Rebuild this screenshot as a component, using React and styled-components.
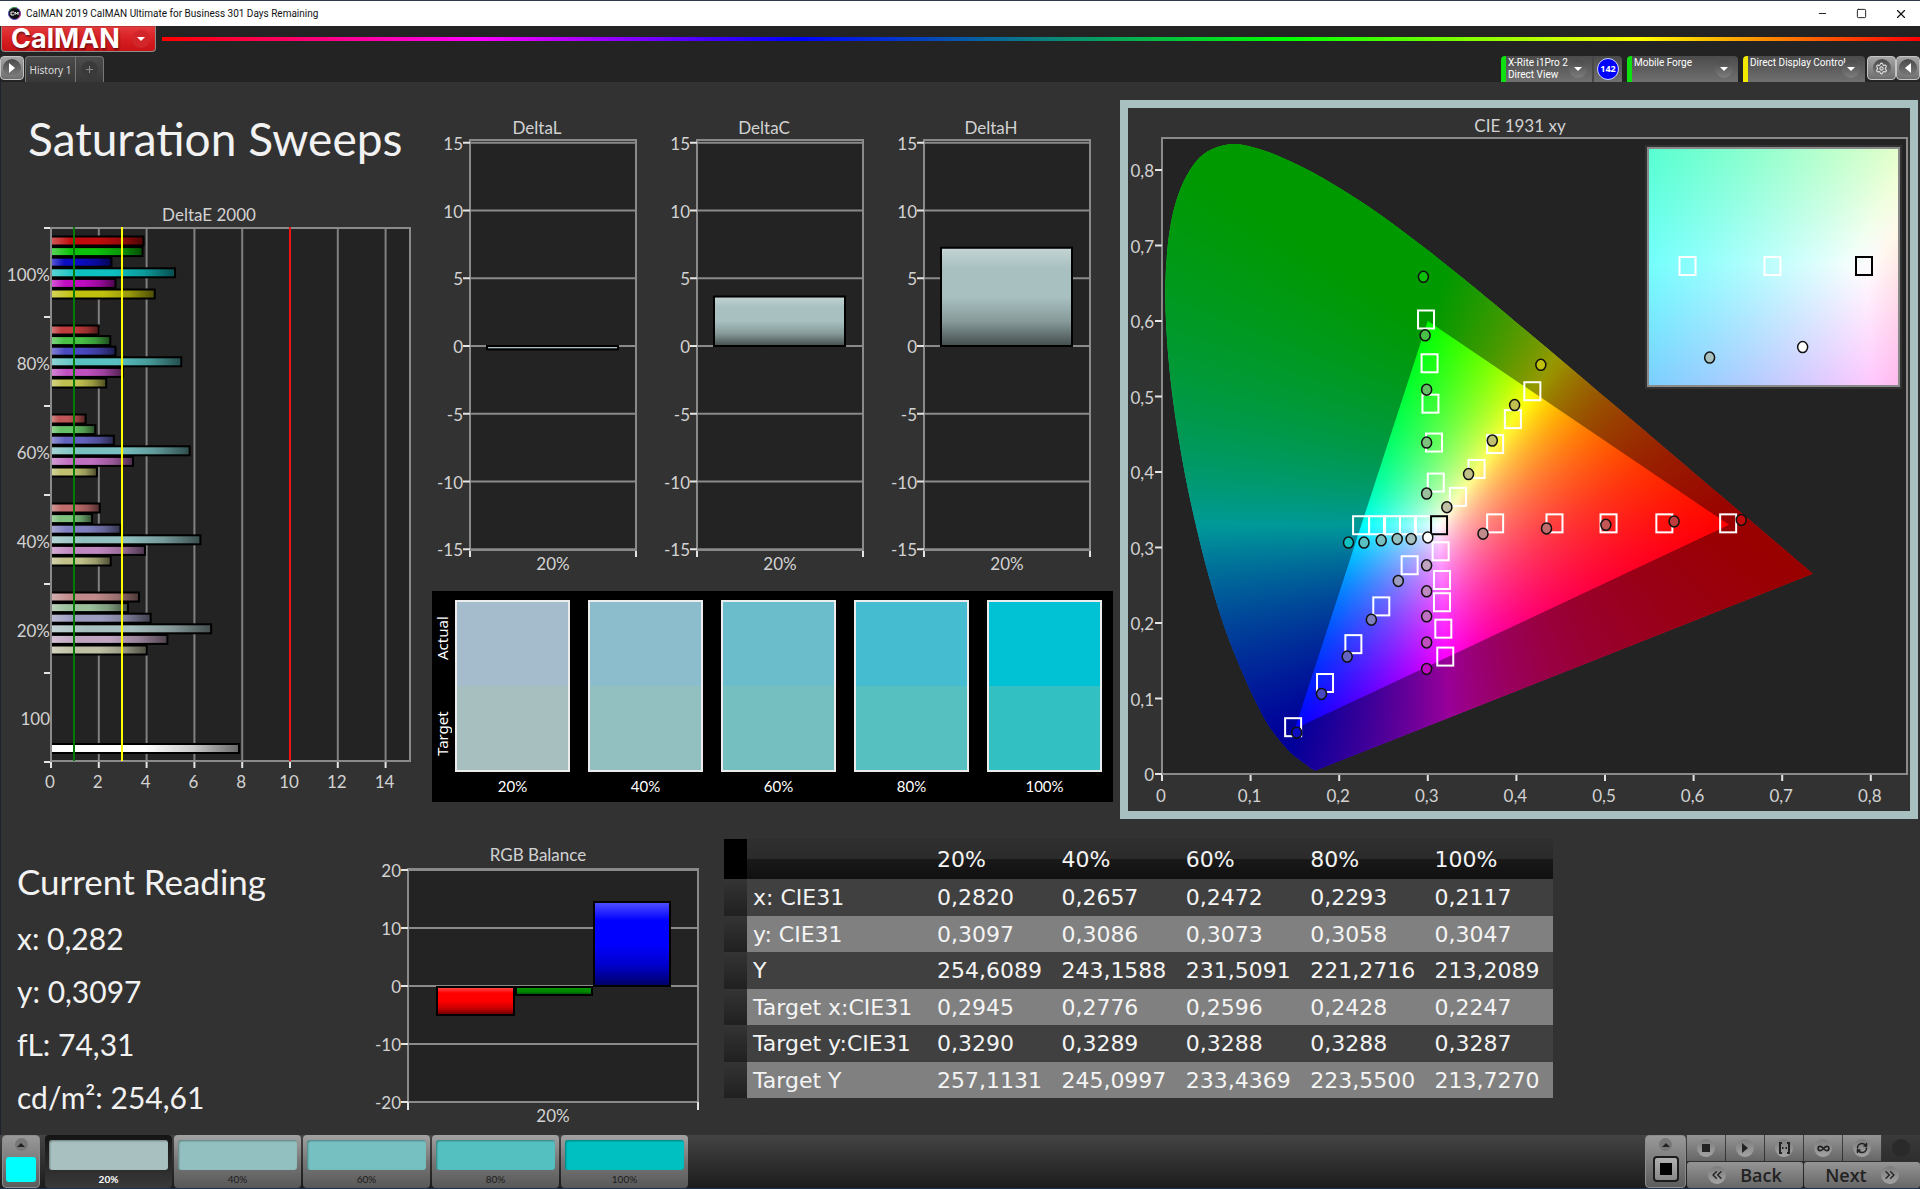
import React from "react"
import styled, { createGlobalStyle } from "styled-components"
import {
  ChevronsLeft,
  ChevronsRight,
  Infinity as InfinityIcon,
  Minus,
  RefreshCw,
  Settings,
  Square,
  X,
} from "lucide-react"

const GlobalStyle = createGlobalStyle`
  * {
    box-sizing: border-box;
  }
  body {
    margin: 0;
    background: #323232;
    font-family: Lato, "Open Sans", sans-serif;
  }
  button {
    margin: 0;
    padding: 0;
    border: 0;
    font: inherit;
    color: inherit;
    cursor: pointer;
  }
  svg {
    display: block;
  }
`

/* ---------- window frame ---------- */

const Shell = styled.div`
  display: flex;
  flex-direction: column;
  min-height: 100vh;
  border-top: 1px solid #2f3a4a;
  border-bottom: 1px solid #1b3350;
  background: linear-gradient(to right, #1c232d 1px, #323232 1px);
`

const TitleBar = styled.div`
  display: flex;
  align-items: center;
  height: 25px;
  padding-left: 8px;
  background: #fff;
  color: #111;
  font: 10px/16px Roboto, sans-serif;
`

const TitleText = styled.span`
  flex: 1;
  padding-left: 5px;
`

const WindowButton = styled.button`
  display: flex;
  align-items: center;
  justify-content: center;
  width: 39px;
  height: 25px;
  background: none;
`

const Header = styled.header`
  background: #232323;
`

const BrandRow = styled.div`
  display: flex;
  align-items: center;
  gap: 6px;
  height: 26px;
`

const BrandButton = styled.button`
  display: flex;
  align-items: center;
  justify-content: space-between;
  width: 155px;
  height: 26px;
  margin-left: 1px;
  padding: 0 5px 0 9px;
  border: 1px solid #8d8d8d;
  border-top-color: #b33;
  border-radius: 0 0 4px 4px;
  background: linear-gradient(#e23a3c, #d81f22 50%, #c81215);
  color: #fff;
  font: 700 27px/24px Inter, sans-serif;
  text-shadow: 1px 2px 2px rgba(0, 0, 0, 0.45);
`

const Rainbow = styled.div`
  flex: 1;
  height: 4px;
  background: linear-gradient(
    to right,
    #f00,
    #f0f 18%,
    #00f 36%,
    #0a8080 50%,
    #0f0 64%,
    #ff0 84%,
    #f00
  );
`

const TabRow = styled.div`
  display: flex;
  align-items: flex-start;
  height: 30px;
  padding-top: 4px;
`

const Knob = styled.span`
  display: flex;
  flex: none;
  align-items: center;
  justify-content: center;
  width: ${(p) => p.$size || 18}px;
  height: ${(p) => p.$size || 18}px;
  border-radius: 50%;
  background: ${(p) => p.$fill || "linear-gradient(#4a4a4a, #7d7d7d)"};
`

const SquareButton = styled.button`
  display: flex;
  align-items: center;
  justify-content: center;
  width: ${(p) => p.$width}px;
  height: 24px;
  border: 1px solid #c4c4c4;
  border-radius: 4px;
  background: linear-gradient(#a5a5a5, #6e6e6e);
`

const Tabs = styled.div`
  display: flex;
  height: 26px;
  margin-left: 1px;
  border: 1px solid #777;
  border-bottom: 0;
  border-radius: 4px 4px 0 0;
  background: linear-gradient(#4c4c4c, #373737);
`

const Tab = styled.button`
  display: flex;
  align-items: center;
  justify-content: center;
  width: ${(p) => p.$width}px;
  border-right: ${(p) => (p.$divided ? "1px solid #777" : "0")};
  background: none;
  color: #dcdcdc;
  font: 10px/24px "Noto Sans", sans-serif;
`

const Spacer = styled.div`
  flex: 1;
`

const Devices = styled.div`
  display: flex;
  gap: 5px;
  margin-right: 2px;
`

const Device = styled.div`
  display: flex;
  width: ${(p) => p.$width}px;
  height: 26px;
  border-left: 5px solid ${(p) => p.$status};
  border-radius: 4px 4px 0 0;
  background: linear-gradient(#4b4b4b, #707070);
  color: #fff;
  font: 10px/12px Roboto, sans-serif;
`

const DeviceButton = styled.button`
  display: flex;
  flex: 1;
  align-items: center;
  justify-content: space-between;
  min-width: 0;
  padding: 0 5px 0 2px;
  background: none;
  text-align: left;
  white-space: nowrap;
`

const DeviceName = styled.span`
  align-self: flex-start;
  min-width: 0;
  padding-top: 1px;
`

const DeviceCount = styled.span`
  display: flex;
  align-items: center;
  justify-content: center;
  width: 30px;
  border-left: 2px solid #484848;
`

const CountBadge = styled.span`
  width: 22px;
  height: 22px;
  border: 1px solid #cfd6ff;
  border-radius: 50%;
  background: #00f;
  font: 700 9px/20px "Noto Sans", sans-serif;
  text-align: center;
`

/* ---------- page ---------- */

const Body = styled.main`
  flex: 1;
`

const TopRow = styled.section`
  display: grid;
  grid-template-columns: 430fr 690fr 800fr;
  align-items: start;
`

const BottomRow = styled.section`
  display: grid;
  grid-template-columns: 370fr 354fr 829fr 367fr;
  align-items: start;
  padding-top: 2px;
`

const Column = styled.div`
  min-width: 0;
  padding-top: ${(p) => p.$top || 0}px;
`

const PageTitle = styled.h1`
  margin: 0 0 32px;
  padding-left: 28px;
  color: #f2f2f2;
  font-weight: 400;
  font-size: 46px;
  line-height: 56px;
  white-space: nowrap;
`

const Chart = styled.svg`
  width: 100%;
  height: auto;
  fill: #d2d2d2;
  font-family: Lato, sans-serif;
  font-size: 17px;
`

const CompareBox = styled.div`
  display: flex;
  gap: 6px;
  height: 211px;
  margin: 7px 7px 0 2px;
  padding: 9px 11px 0 3px;
  background: #000;
  color: #fff;
`

const CompareLegend = styled.div`
  display: flex;
  flex-direction: column;
  gap: 18px;
  width: 14px;
  height: 172px;
  font: 15px/14px "Noto Sans", sans-serif;
  span {
    flex: 1;
    writing-mode: vertical-rl;
    transform: rotate(180deg);
    text-align: center;
  }
`

const ComparePairs = styled.div`
  display: grid;
  flex: 1;
  grid-template-columns: repeat(5, 1fr);
  gap: 18px;
`

const Pair = styled.div`
  font-size: 15px;
  line-height: 28px;
  text-align: center;
`

const PairSwatch = styled.div`
  height: 172px;
  border: 2px solid #ececec;
  background: linear-gradient(
    ${(p) => p.$actual} 50%,
    ${(p) => p.$target} 50%
  );
`

const CiePanel = styled.div`
  margin-right: 2px;
  border: 8px solid #a9c0c1;
`

const GamutFill = styled.div`
  width: 100%;
  height: 100%;
  background-blend-mode: darken;
`

const Readings = styled.div`
  padding: 33px 0 0 17px;
  color: #f2f2f2;
`

const ReadingsTitle = styled.h2`
  margin: 0 0 4px;
  font-weight: 400;
  font-size: 35px;
  line-height: 54px;
`

const Reading = styled.p`
  margin: 0;
  font-size: 30px;
  line-height: 53px;
`

const DataTable = styled.table`
  width: 100%;
  table-layout: fixed;
  border-collapse: collapse;
  margin-top: 18px;
  color: #f4f4f4;
  font: 22px/30px "DejaVu Sans", sans-serif;
  th,
  td {
    padding: 1px 0 0 6px;
    font-weight: 400;
    text-align: left;
    white-space: nowrap;
  }
  thead tr {
    height: 40px;
    background: linear-gradient(#2f2f2f, #2b2b2b 50%, #191919 50%, #101010);
  }
  tbody tr {
    height: 37px;
    background: #404040;
  }
  tbody tr:nth-child(even) {
    height: 36px;
    background: #808080;
  }
  thead td:first-child {
    background: #000;
  }
  tbody td:first-child {
    background: linear-gradient(#343434, #202020);
  }
`

/* ---------- bottom bar ---------- */

const Footer = styled.footer`
  display: flex;
  height: 53px;
  padding-left: 2px;
  background: linear-gradient(#444, #1c1c1c);
`

const FlyoutButton = styled.button`
  display: flex;
  flex-direction: column;
  align-items: center;
  justify-content: space-between;
  width: ${(p) => p.$width}px;
  padding: 2px 4px 5px;
  border: 1px solid #8c8c8c;
  border-radius: 4px;
  background: linear-gradient(#999, #5c5c5c);
`

const CurrentColor = styled.span`
  width: 30px;
  height: 25px;
  border-radius: 3px;
  background: #0ff;
`

const StopFrame = styled.span`
  display: flex;
  align-items: center;
  justify-content: center;
  width: 26px;
  height: 26px;
  border: 2px solid #1c1c1c;
  border-radius: 4px;
  background: linear-gradient(#b0b0b0, #888);
`

const Steps = styled.div`
  display: flex;
  gap: 2px;
  margin-left: 5px;
`

const StepButton = styled.button`
  width: 127px;
  padding: 5px 4px 0;
  border-radius: 4px;
  background: ${(p) =>
    p.$active
      ? "linear-gradient(#141414, #3a3a3a)"
      : "linear-gradient(#a2a2a2, #777 50%, #585858)"};
  color: ${(p) => (p.$active ? "#fff" : "#1c1c1c")};
  font-weight: ${(p) => (p.$active ? 700 : 400)};
  font-size: 10px;
  line-height: 18px;
`

const StepColor = styled.span`
  display: block;
  height: 30px;
  border-radius: 3px;
  background: ${(p) => p.$color};
  box-shadow: inset 1px 1px 2px rgba(0, 0, 0, 0.35);
`

const Transport = styled.div`
  display: grid;
  grid-template-columns: repeat(6, 38px);
  grid-template-rows: 26px 26px;
  gap: 1px;
  margin-left: 1px;
  width: 233px;
`

const TransportButton = styled.button`
  display: flex;
  align-items: center;
  justify-content: center;
  background: ${(p) =>
    p.disabled
      ? "linear-gradient(#3a3a3a, #2e2e2e)"
      : "linear-gradient(#959595, #666)"};
  color: #222;
`

const NavButton = styled(TransportButton)`
  grid-column: span 3;
  gap: 14px;
  border-radius: 3px;
  font: 600 18px/24px "Open Sans", sans-serif;
`

/* ---------- data ---------- */

const LEVELS = ["100%", "80%", "60%", "40%", "20%"]

// red, green, blue, cyan, magenta, yellow for each saturation level
const PALETTE = [
  ["#c00c0c", "#0cc00c", "#0c0cc0", "#0fc0c0", "#c00cc0", "#c0c00f"],
  ["#c03c3c", "#48c048", "#4848c0", "#58c0c0", "#c050c0", "#c0c050"],
  ["#c05656", "#64c064", "#6464c0", "#78c0c0", "#c070c0", "#c0c070"],
  ["#c06c6c", "#7ec07e", "#8080c0", "#92c0c0", "#c088c0", "#c0c088"],
  ["#c08a8a", "#9cc09c", "#9c9cc0", "#a8c0c0", "#c0a4c0", "#c0c0a4"],
]

const DELTA_E = [
  [3.87, 3.83, 2.53, 5.19, 2.7, 4.34],
  [2.0, 2.48, 2.7, 5.45, 3.0, 2.31],
  [1.45, 1.85, 2.63, 5.8, 3.43, 1.92],
  [2.04, 1.72, 2.91, 6.25, 3.93, 2.5],
  [3.68, 3.22, 4.17, 6.7, 4.87, 4.01],
]

const PAIRS = [
  ["20%", "#a4bccb", "#a8bfbf"],
  ["40%", "#8cbdcc", "#92bfbf"],
  ["60%", "#6cbdcc", "#76bfc0"],
  ["80%", "#45bccf", "#56bfc0"],
  ["100%", "#00c2d4", "#32c0c2"],
]

const STEPS = [
  ["20%", "#a8c0c0"],
  ["40%", "#92c0c0"],
  ["60%", "#76c0c2"],
  ["80%", "#54c0c0"],
  ["100%", "#00c0c2"],
]

const TABLE_HEAD = ["20%", "40%", "60%", "80%", "100%"]
const TABLE_ROWS = [
  ["x: CIE31", "0,2820", "0,2657", "0,2472", "0,2293", "0,2117"],
  ["y: CIE31", "0,3097", "0,3086", "0,3073", "0,3058", "0,3047"],
  ["Y", "254,6089", "243,1588", "231,5091", "221,2716", "213,2089"],
  ["Target x:CIE31", "0,2945", "0,2776", "0,2596", "0,2428", "0,2247"],
  ["Target y:CIE31", "0,3290", "0,3289", "0,3288", "0,3288", "0,3287"],
  ["Target Y", "257,1131", "245,0997", "233,4369", "223,5500", "213,7270"],
]

const READINGS = ["x: 0,282", "y: 0,3097", "fL: 74,31", "cd/m²: 254,61"]

const TARGETS = [
  [0.298, 0.602], [0.302, 0.544], [0.303, 0.4905], [0.307, 0.439], [0.309, 0.386],
  [0.418, 0.507], [0.396, 0.47], [0.376, 0.437], [0.355, 0.404], [0.334, 0.367],
  [0.2247, 0.3295], [0.2428, 0.3295], [0.2596, 0.3295], [0.2776, 0.3295], [0.2945, 0.3295],
  [0.376, 0.332], [0.443, 0.332], [0.504, 0.332], [0.567, 0.332], [0.639, 0.332],
  [0.3145, 0.295], [0.316, 0.257], [0.316, 0.2275], [0.3175, 0.1925], [0.3197, 0.1555],
  [0.2795, 0.2765], [0.2475, 0.222], [0.216, 0.172], [0.184, 0.1205], [0.148, 0.062],
]

// same colour order as PALETTE, 100% first
const MEASURED = [
  [[0.6538, 0.3365], [0.578, 0.3346], [0.501, 0.33], [0.434, 0.3252], [0.3623, 0.3183]],
  [[0.295, 0.6585], [0.297, 0.581], [0.2987, 0.509], [0.2987, 0.439], [0.2987, 0.3715]],
  [[0.152, 0.0547], [0.18, 0.106], [0.209, 0.1555], [0.2363, 0.2044], [0.2667, 0.2557]],
  [[0.2105, 0.3065], [0.228, 0.3065], [0.2474, 0.3095], [0.2655, 0.3114], [0.2812, 0.3114]],
  [[0.2987, 0.1392], [0.2987, 0.1743], [0.2987, 0.2088], [0.2987, 0.242], [0.2987, 0.2764]],
  [[0.4276, 0.542], [0.398, 0.4887], [0.3728, 0.4417], [0.346, 0.3973], [0.3215, 0.3534]],
]

const LOCUS = [
  [0.1741, 0.005], [0.1726, 0.0048], [0.1689, 0.0069], [0.1644, 0.0109],
  [0.1566, 0.0177], [0.144, 0.0297], [0.1241, 0.0578], [0.1096, 0.0868],
  [0.0913, 0.1327], [0.0687, 0.2007], [0.0454, 0.295], [0.0235, 0.4127],
  [0.0082, 0.5384], [0.0039, 0.6548], [0.0139, 0.7502], [0.0389, 0.812],
  [0.0743, 0.8338], [0.1142, 0.8262], [0.1547, 0.8059], [0.1929, 0.7816],
  [0.2296, 0.7543], [0.2658, 0.7243], [0.3016, 0.6923], [0.3373, 0.6589],
  [0.3731, 0.6245], [0.4441, 0.5547], [0.5125, 0.4866], [0.5752, 0.4242],
  [0.627, 0.3725], [0.6658, 0.334], [0.6915, 0.3083], [0.719, 0.2809],
  [0.7347, 0.2653],
]

const RED = [0.64, 0.33]
const GREEN = [0.3, 0.6]
const BLUE = [0.15, 0.06]

/* ---------- chromaticity colours ---------- */

const toLinearRgb = (x, y) => {
  const z = 1 - x - y
  return [
    3.2406 * x - 1.5372 * y - 0.4986 * z,
    -0.9689 * x + 1.8758 * y + 0.0415 * z,
    0.0557 * x - 0.204 * y + 1.057 * z,
  ]
}

const ratio = (a, b) => {
  if (a <= 0) return b <= 0 ? 1 : 0
  if (b <= 0) return 1
  return Math.min(1, a / b)
}

// The ratio of two channels is constant along every line through the third
// primary, so it is a conic gradient round that primary.
const channelGradient = (primary, i, j, view) => {
  const stops = []
  for (let deg = 0; deg <= 360; deg++) {
    const rad = (deg * Math.PI) / 180
    const lin = toLinearRgb(
      primary[0] + (Math.sin(rad) * 500) / view.kx,
      primary[1] + (Math.cos(rad) * 500) / view.ky
    )
    const rgb = [255, 255, 255]
    rgb[i] = Math.round(255 * ratio(lin[i], lin[j]))
    rgb[j] = Math.round(255 * ratio(lin[j], lin[i]))
    stops.push(`rgb(${rgb.join(",")}) ${deg}deg`)
  }
  const cx = view.x(primary[0]) - view.left
  const cy = view.y(primary[1]) - view.top
  return `conic-gradient(at ${cx}px ${cy}px, ${stops.join(",")})`
}

const gamutBackground = (view) =>
  [
    channelGradient(BLUE, 0, 1, view),
    channelGradient(GREEN, 0, 2, view),
    channelGradient(RED, 1, 2, view),
  ].join(",")

const makeView = (left, top, width, height, x0, y0, kx, ky, ox, oy) => ({
  left,
  top,
  width,
  height,
  kx,
  ky,
  x: (v) => ox + (v - x0) * kx,
  y: (v) => oy - (v - y0) * ky,
})

const mainView = makeView(34, 30, 745, 636, 0, 0, 886, 755, 34, 666)
const insetView = makeView(520, 40, 251, 238, 0.3127, 0.329, 5028, 4743, 736, 158)

const smoothPath = (points) => {
  let d = `M${points[0].join(" ")}`
  for (let i = 0; i < points.length - 1; i++) {
    const p0 = points[i - 1] || points[i]
    const p1 = points[i]
    const p2 = points[i + 1]
    const p3 = points[i + 2] || p2
    d += `C${p1[0] + (p2[0] - p0[0]) / 6} ${p1[1] + (p2[1] - p0[1]) / 6} ${
      p2[0] - (p3[0] - p1[0]) / 6
    } ${p2[1] - (p3[1] - p1[1]) / 6} ${p2[0]} ${p2[1]}`
  }
  return d + "Z"
}

const toView = ([x, y]) => [mainView.x(x), mainView.y(y)]
const locusPath = smoothPath(LOCUS.map(toView))
const trianglePath = `M${[RED, GREEN, BLUE].map((p) => toView(p).join(" ")).join("L")}Z`

/* ---------- charts ---------- */

const LINE = "#8a8a8a"
const TICK = "#e4e4e4"
const PLOT = "#232323"

const Shine = ({ id, vertical }) => (
  <linearGradient id={id} x1="0" y1="0" x2={vertical ? 0 : 1} y2={vertical ? 1 : 0}>
    <stop offset="0" stopColor="#fff" stopOpacity="0.32" />
    <stop offset="0.22" stopColor="#fff" stopOpacity="0" />
    <stop offset="0.5" stopColor="#000" stopOpacity="0" />
    <stop offset="0.75" stopColor="#000" stopOpacity="0.2" />
    <stop offset="1" stopColor="#000" stopOpacity="0.6" />
  </linearGradient>
)

const Bar = ({ x, y, width, height, color, shine }) => (
  <g>
    <rect x={x} y={y} width={width} height={height} fill={color} />
    <rect
      x={x}
      y={y}
      width={width}
      height={height}
      fill={`url(#${shine})`}
      stroke="#000"
      strokeWidth="2"
    />
  </g>
)

const DeltaEChart = () => {
  const px = (v) => 51 + v * 23.9
  const rows = [0, 1, 2, 3, 4, 5, 6]
  return (
    <Chart viewBox="0 0 430 610" role="img" aria-label="DeltaE 2000">
      <defs>
        <Shine id="shineX" />
      </defs>
      <text x="209" y="22" textAnchor="middle">DeltaE 2000</text>
      <rect x="51" y="29" width="359" height="533" fill={PLOT} />
      {[2, 4, 6, 8, 10, 12, 14].map((v) => (
        <path key={v} d={`M${px(v)} 29V562`} stroke="#808080" strokeWidth="2" />
      ))}
      {rows.map((r) => (
        <path key={r} d={`M44 ${29 + r * 89}H51`} stroke={TICK} strokeWidth="2" />
      ))}
      {[0, 2, 4, 6, 8, 10, 12, 14].map((v) => (
        <g key={v}>
          <path d={`M${px(v)} 563V569`} stroke={TICK} strokeWidth="2" />
          <text x={px(v) - 1} y="589" textAnchor="middle">{v}</text>
        </g>
      ))}
      {DELTA_E.map((group, g) => (
        <g key={LEVELS[g]}>
          <text x="50" y={82 + g * 89} textAnchor="end">{LEVELS[g]}</text>
          {group.map((v, i) => (
            <Bar
              key={i}
              x={51}
              y={37.5 + g * 89 + i * 10.6}
              width={v * 23.9}
              height={9}
              color={PALETTE[g][i]}
              shine="shineX"
            />
          ))}
        </g>
      ))}
      <text x="50" y="526" textAnchor="end">100</text>
      <Bar x={51} y={545} width={188} height={9} color="#fff" shine="shineX" />
      <rect x="51" y="29" width="359" height="533" fill="none" stroke={LINE} strokeWidth="2" />
      <path d="M74 28V562" stroke="#007a00" strokeWidth="2" />
      <path d="M122 28V562" stroke="#ff0" strokeWidth="2" />
      <path d="M290 28V562" stroke="#f01414" strokeWidth="2" />
    </Chart>
  )
}

const DELTAS = [
  ["DeltaL", -0.25],
  ["DeltaC", 3.65],
  ["DeltaH", 7.25],
]

const DeltaCharts = () => {
  const py = (v) => 242 - v * 13.55
  return (
    <Chart viewBox="0 0 690 480" role="img" aria-label="DeltaL, DeltaC and DeltaH">
      <defs>
        <Shine id="shineY" vertical />
      </defs>
      {DELTAS.map(([name, value], i) => (
        <g key={name} transform={`translate(${40 + i * 227} 0)`}>
          <text x="67" y="30" textAnchor="middle">{name}</text>
          <rect x="0" y="36" width="166" height="410" fill={PLOT} stroke={LINE} strokeWidth="2" />
          {[15, 10, 5, 0, -5, -10, -15].map((v) => (
            <g key={v}>
              <path d={`M0 ${py(v)}H166`} stroke={LINE} strokeWidth="2" />
              <path d={`M-7 ${py(v)}H0`} stroke={TICK} strokeWidth="2" />
              <text x="-7" y={py(v) + 7} textAnchor="end">{v}</text>
            </g>
          ))}
          <path d="M0 447V453M166 447V453" stroke={TICK} strokeWidth="2" />
          <Bar
            x={17}
            y={value > 0 ? py(value) : 242}
            width={131}
            height={Math.abs(value) * 13.55}
            color="#a8c0c0"
            shine="shineY"
          />
          <text x="83" y="466" textAnchor="middle">20%</text>
        </g>
      ))}
    </Chart>
  )
}

const RgbBalance = () => {
  const py = (v) => 165 - v * 5.8
  return (
    <Chart viewBox="-10 0 354 310" role="img" aria-label="RGB Balance">
      <text x="158" y="40" textAnchor="middle">RGB Balance</text>
      <rect x="28" y="48" width="290" height="233" fill={PLOT} stroke={LINE} strokeWidth="2" />
      {[20, 10, 0, -10, -20].map((v) => (
        <g key={v}>
          <path d={`M28 ${py(v)}H318`} stroke={LINE} strokeWidth="2" />
          <path d={`M21 ${py(v)}H28`} stroke={TICK} strokeWidth="2" />
          <text x="21" y={py(v) + 7} textAnchor="end">{v}</text>
        </g>
      ))}
      <path d="M28 281V289M318 281V289" stroke={TICK} strokeWidth="2" />
      <Bar x={57} y={166} width={77} height={28} color="#f00" shine="shineY" />
      <Bar x={136} y={166} width={76} height={8} color="#008c00" shine="shineY" />
      <Bar x={214} y={81} width={76} height={84} color="#00f" shine="shineY" />
      <text x="173" y="301" textAnchor="middle">20%</text>
    </Chart>
  )
}

const Target = ({ view, at, color = "#fff" }) => (
  <rect
    x={view.x(at[0]) - 8}
    y={view.y(at[1]) - 9}
    width="16"
    height="18"
    fill="none"
    stroke={color}
    strokeWidth="2"
  />
)

const Dot = ({ view, at, color }) => (
  <ellipse
    cx={view.x(at[0])}
    cy={view.y(at[1])}
    rx="5"
    ry="5.5"
    fill={color}
    stroke="#111"
    strokeWidth="1.5"
  />
)

const WHITE = [0.3127, 0.3295]

const Gamut = ({ view }) => (
  <foreignObject x={view.left} y={view.top} width={view.width} height={view.height}>
    <GamutFill style={{ backgroundImage: gamutBackground(view) }} />
  </foreignObject>
)

const CieChart = () => (
  <Chart viewBox="0 0 782 703" role="img" aria-label="CIE 1931 xy">
    <defs>
      <clipPath id="locus">
        <path d={locusPath} />
      </clipPath>
    </defs>
    <text x="392" y="24" textAnchor="middle">CIE 1931 xy</text>
    <rect x="34" y="30" width="745" height="636" fill={PLOT} stroke={LINE} strokeWidth="2" />
    <g clipPath="url(#locus)">
      <Gamut view={mainView} />
      <path d={locusPath + trianglePath} fillRule="evenodd" fill="#000" fillOpacity="0.4" />
    </g>
    {[0, 1, 2, 3, 4, 5, 6, 7, 8].map((n) => {
      const x = mainView.x(n / 10)
      const y = mainView.y(n / 10)
      const label = n ? `0,${n}` : "0"
      return (
        <g key={n}>
          <path d={`M${x} 667V673M27 ${y}H34`} stroke={TICK} strokeWidth="2" />
          <text x={x - 1} y="694" textAnchor="middle">{label}</text>
          <text x="26" y={y + 7} textAnchor="end">{label}</text>
        </g>
      )
    })}
    {TARGETS.map((at, i) => (
      <Target key={i} view={mainView} at={at} />
    ))}
    <Target view={mainView} at={WHITE} color="#000" />
    {MEASURED.map((points, c) =>
      points.map((at, level) => (
        <Dot key={`${c}-${level}`} view={mainView} at={at} color={PALETTE[level][c]} />
      ))
    )}
    <Dot view={mainView} at={[0.3, 0.3133]} color="#fff" />

    <rect x="517" y="37" width="257" height="244" fill="#323232" />
    <Gamut view={insetView} />
    <rect x="520" y="40" width="251" height="238" fill="none" stroke={LINE} strokeWidth="2" />
    <Target view={insetView} at={[0.2776, 0.329]} />
    <Target view={insetView} at={[0.2945, 0.329]} />
    <Target view={insetView} at={[0.3127, 0.329]} color="#000" />
    <Dot view={insetView} at={[0.282, 0.3097]} color="#a8c0c0" />
    <Dot view={insetView} at={[0.3005, 0.3119]} color="#fff" />
  </Chart>
)

/* ---------- small icons ---------- */

const Triangle = ({ points, size = 10, color = "#fff" }) => (
  <svg width={size} height={size} viewBox="0 0 10 10" fill={color}>
    <polygon points={points} />
  </svg>
)

const DOWN = "1,3 9,3 5,7"
const UP = "1,7 9,7 5,3"
const RIGHT = "2,0 8,5 2,10"
const LEFT = "8,0 2,5 8,10"

const AppIcon = () => (
  <svg width="13" height="13" viewBox="0 0 13 13">
    <circle cx="6.5" cy="6.5" r="6" fill="#111" stroke="#5a48c8" />
    <path d="M1 4A6 6 0 0 1 9 1" fill="none" stroke="#3aa84a" />
    <path d="M12 5A6 6 0 0 1 9 12" fill="none" stroke="#c23a8a" />
    <path d="M6 5H3V8H6M7 8V5L8.500 7L10 5V8" fill="none" stroke="#fff" />
  </svg>
)

const SeriesIcon = () => (
  <svg width="13" height="12" viewBox="0 0 13 12" fill="none" stroke="#222" strokeWidth="2">
    <path d="M4 1H2V11H4M9 1H11V11H9M4 6H5.500M7.500 6H9" />
  </svg>
)

const KNOB = "linear-gradient(#7c7c7c, #a4a4a4)"

const App = () => (
  <>
    <GlobalStyle />
    <Shell>
      <TitleBar>
        <AppIcon />
        <TitleText>CalMAN 2019 CalMAN Ultimate for Business 301 Days Remaining</TitleText>
        <WindowButton aria-label="Minimize">
          <Minus size={11} strokeWidth={2} />
        </WindowButton>
        <WindowButton aria-label="Maximize">
          <Square size={11} strokeWidth={2} />
        </WindowButton>
        <WindowButton aria-label="Close">
          <X size={14} strokeWidth={2} />
        </WindowButton>
      </TitleBar>

      <Header>
        <BrandRow>
          <BrandButton>
            CalMAN
            <Knob $fill="#d3262b">
              <Triangle points={DOWN} />
            </Knob>
          </BrandButton>
          <Rainbow />
        </BrandRow>
        <TabRow>
          <SquareButton $width={24} aria-label="Show workflow">
            <Knob>
              <Triangle points={RIGHT} />
            </Knob>
          </SquareButton>
          <Tabs>
            <Tab $width={50} $divided>History 1</Tab>
            <Tab $width={27} aria-label="Add tab">
              <Knob $size={17} $fill="#3a3a3a">
                <svg width="7" height="7" viewBox="0 0 7 7" stroke="#888">
                  <path d="M3.500 0V7M0 3.500H7" />
                </svg>
              </Knob>
            </Tab>
          </Tabs>
          <Spacer />
          <Devices>
            <Device $width={121} $status="#0fe00f">
              <DeviceButton>
                <DeviceName>
                  X-Rite i1Pro 2
                  <br />
                  Direct View
                </DeviceName>
                <Knob>
                  <Triangle points={DOWN} />
                </Knob>
              </DeviceButton>
              <DeviceCount>
                <CountBadge>142</CountBadge>
              </DeviceCount>
            </Device>
            <Device $width={111} $status="#0fe00f">
              <DeviceButton>
                <DeviceName>Mobile Forge</DeviceName>
                <Knob>
                  <Triangle points={DOWN} />
                </Knob>
              </DeviceButton>
            </Device>
            <Device $width={122} $status="#f0e800">
              <DeviceButton>
                <DeviceName>Direct Display Control</DeviceName>
                <Knob>
                  <Triangle points={DOWN} />
                </Knob>
              </DeviceButton>
            </Device>
          </Devices>
          <SquareButton $width={29} aria-label="Settings">
            <Knob>
              <Settings size={13} color="#e0e0e0" />
            </Knob>
          </SquareButton>
          <SquareButton $width={24} aria-label="Show panel">
            <Knob>
              <Triangle points={LEFT} />
            </Knob>
          </SquareButton>
        </TabRow>
      </Header>

      <Body>
        <TopRow>
          <Column $top={29}>
            <PageTitle>Saturation Sweeps</PageTitle>
            <DeltaEChart />
          </Column>
          <Column $top={22}>
            <DeltaCharts />
            <CompareBox>
              <CompareLegend>
                <span>Actual</span>
                <span>Target</span>
              </CompareLegend>
              <ComparePairs>
                {PAIRS.map(([label, actual, target]) => (
                  <Pair key={label}>
                    <PairSwatch $actual={actual} $target={target} />
                    {label}
                  </Pair>
                ))}
              </ComparePairs>
            </CompareBox>
          </Column>
          <Column $top={18}>
            <CiePanel>
              <CieChart />
            </CiePanel>
          </Column>
        </TopRow>

        <BottomRow>
          <Readings>
            <ReadingsTitle>Current Reading</ReadingsTitle>
            {READINGS.map((r) => (
              <Reading key={r}>{r}</Reading>
            ))}
          </Readings>
          <Column>
            <RgbBalance />
          </Column>
          <Column>
            <DataTable>
              <colgroup>
                <col width="23" />
                <col width="184" />
                <col />
                <col />
                <col />
                <col />
                <col />
              </colgroup>
              <thead>
                <tr>
                  <td />
                  <td />
                  {TABLE_HEAD.map((h) => (
                    <th key={h} scope="col">{h}</th>
                  ))}
                </tr>
              </thead>
              <tbody>
                {TABLE_ROWS.map(([name, ...cells]) => (
                  <tr key={name}>
                    <td />
                    <th scope="row">{name}</th>
                    {cells.map((c, i) => (
                      <td key={i}>{c}</td>
                    ))}
                  </tr>
                ))}
              </tbody>
            </DataTable>
          </Column>
        </BottomRow>
      </Body>

      <Footer>
        <FlyoutButton $width={38} aria-label="Current colour">
          <Knob $size={13} $fill="#777">
            <Triangle points={UP} color="#222" />
          </Knob>
          <CurrentColor />
        </FlyoutButton>
        <Steps>
          {STEPS.map(([label, color], i) => (
            <StepButton key={label} $active={i === 0}>
              <StepColor $color={color} />
              {label}
            </StepButton>
          ))}
        </Steps>
        <Spacer />
        <FlyoutButton $width={41} aria-label="Pattern window">
          <Knob $size={13} $fill="#777">
            <Triangle points={UP} color="#222" />
          </Knob>
          <StopFrame>
            <svg width="12" height="12" viewBox="0 0 12 12">
              <rect width="12" height="12" fill="#000" />
            </svg>
          </StopFrame>
        </FlyoutButton>
        <Transport>
          <TransportButton aria-label="Stop">
            <Knob $fill={KNOB}>
              <svg width="8" height="8" viewBox="0 0 8 8">
                <rect width="8" height="8" fill="#222" />
              </svg>
            </Knob>
          </TransportButton>
          <TransportButton aria-label="Read">
            <Knob $fill={KNOB}>
              <Triangle points={RIGHT} color="#222" />
            </Knob>
          </TransportButton>
          <TransportButton aria-label="Read series">
            <Knob $fill={KNOB}>
              <SeriesIcon />
            </Knob>
          </TransportButton>
          <TransportButton aria-label="Read continuously">
            <Knob $fill={KNOB}>
              <InfinityIcon size={13} strokeWidth={3} />
            </Knob>
          </TransportButton>
          <TransportButton aria-label="Refresh">
            <Knob $fill={KNOB}>
              <RefreshCw size={12} strokeWidth={3} />
            </Knob>
          </TransportButton>
          <TransportButton aria-label="Record" disabled>
            <Knob $fill="#2a2a2a" />
          </TransportButton>
          <NavButton>
            <Knob $fill={KNOB}>
              <ChevronsLeft size={16} />
            </Knob>
            Back
          </NavButton>
          <NavButton>
            Next
            <Knob $fill={KNOB}>
              <ChevronsRight size={16} />
            </Knob>
          </NavButton>
        </Transport>
      </Footer>
    </Shell>
  </>
)

export default App
